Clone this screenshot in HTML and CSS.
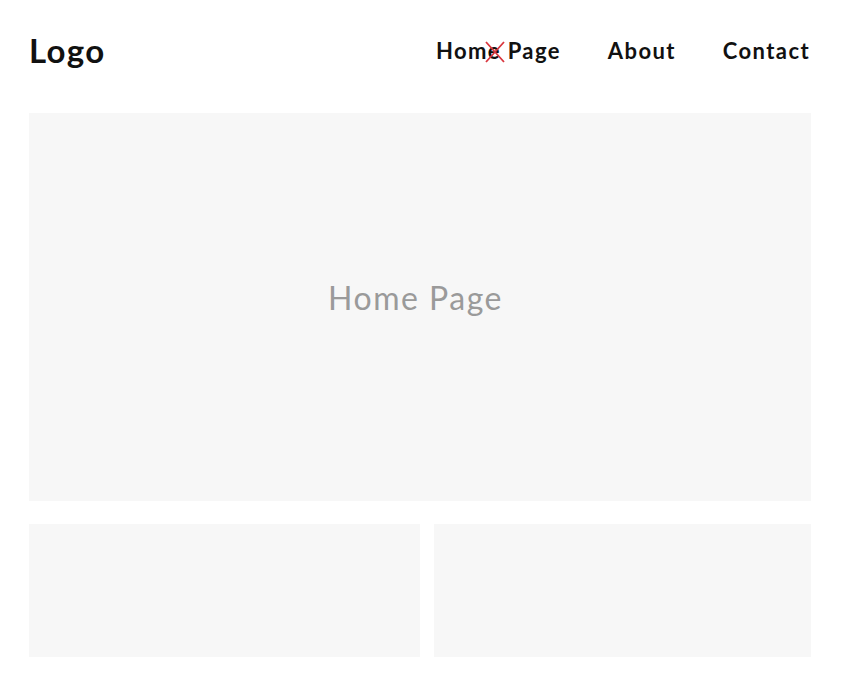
FILE: index.html
```html
<!DOCTYPE html>
<html lang="en">
<head>
    <meta charset="UTF-8">
    <meta name="viewport" content="width=device-width, initial-scale=1.0">
    <title>Home Page</title>
    <link rel="stylesheet" href="styles.css">
</head>
<body>

    <div class="page">
        <div class="header">
            <div class="logo">Logo</div>
            <div class="nav">
                <a href="#" class="nav-link current">Home Page
                    <svg class="cross" width="22" height="24" viewBox="0 0 22 24">
                        <path d="M2 2 L20 22 M20 2 L2 22" stroke="#d9363e" stroke-width="1.8" fill="none"/>
                    </svg>
                </a>
                <a href="#" class="nav-link">About</a>
                <a href="#" class="nav-link">Contact</a>
            </div>
        </div>

        <div class="hero">
            <h1>Home Page</h1>
        </div>

        <div class="cards">
            <div class="card"></div>
            <div class="card"></div>
        </div>
    </div>

</body>
</html>
```

FILE: styles.css
```css
body {
    font-family: Lato, "Noto Sans", sans-serif;
    background-color: #ffffff;
    color: #111;
    margin: 0;
    padding: 0;
}

.page {
    padding: 0 34px 0 29px;
}

.header {
    display: flex;
    justify-content: space-between;
    align-items: center;
    height: 100px;
    padding-bottom: 2px;
}

.logo {
    font-size: 33px;
    font-weight: 700;
    letter-spacing: 1.3px;
}

.nav {
    display: flex;
    gap: 47px;
    padding-right: 1px;
}

.nav-link {
    position: relative;
    color: #111;
    text-decoration: none;
    font-size: 22px;
    font-weight: 700;
    letter-spacing: 1.4px;
}

.cross {
    position: absolute;
    left: 48px;
    top: 3px;
}

.hero {
    display: flex;
    align-items: center;
    justify-content: center;
    height: 388px;
    margin-top: 11px;
    padding: 0 9px 20px 0;
    box-sizing: border-box;
    background-color: #f7f7f7;
}

.hero h1 {
    margin: 0;
    font-size: 32px;
    font-weight: 400;
    color: #9a9a9a;
    letter-spacing: 1.5px;
}

.cards {
    display: grid;
    grid-template-columns: 391px 1fr;
    gap: 14px;
    margin-top: 23px;
}

.card {
    height: 133px;
    background-color: #f7f7f7;
}
```
